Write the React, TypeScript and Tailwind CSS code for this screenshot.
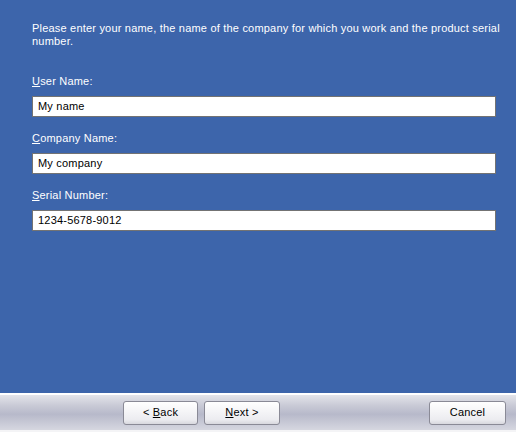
export default function App() {
  const fields = [
    { key: "U", rest: "ser Name:", value: "My name" },
    { key: "C", rest: "ompany Name:", value: "My company" },
    { key: "S", rest: "erial Number:", value: "1234-5678-9012" },
  ];

  return (
    <div className="w-[516px] h-[432px] flex flex-col bg-[#3d65ab] font-['Liberation_Sans',Tahoma,sans-serif] text-[11px] tracking-[0.2px]">
      {/* Body */}
      <div className="flex-1 pl-[32px] pr-[20px] pt-[22px]">
        <p className="text-white leading-[13px] whitespace-nowrap">
          Please enter your name, the name of the company for which you work and the product serial
          <br />
          number.
        </p>
        <div className="mt-[27px] flex flex-col gap-[15px]">
          {fields.map((f) => (
            <div key={f.key} className="flex flex-col gap-[8px]">
              <label className="text-white leading-[13px]">
                <span className="underline">{f.key}</span>
                {f.rest}
              </label>
              <div className="h-[21px] bg-white border border-[#737373] flex items-center pl-[5px] text-black">
                {f.value}
              </div>
            </div>
          ))}
        </div>
      </div>

      {/* Button bar */}
      <div className="h-[39px] flex flex-col">
        <div className="h-[2px] bg-white" />
        <div className="flex-1 flex items-center pr-[10px] bg-[linear-gradient(to_bottom,#e4e4ea_0%,#c9cad6_30%,#b7b9ca_55%,#d6d7e0_100%)] border-b-2 border-[#f4f4f6]">
          <div className="flex gap-[6px] ml-[123px]">
            <button className="w-[75px] h-[24px] rounded-[3px] border border-[#8a8a96] bg-[linear-gradient(to_bottom,#ffffff,#ececf0_80%,#d8d8de)] text-black">
              &lt; <span className="underline">B</span>ack
            </button>
            <button className="w-[76px] h-[24px] rounded-[3px] border border-[#8a8a96] bg-[linear-gradient(to_bottom,#ffffff,#ececf0_80%,#d8d8de)] text-black">
              <span className="underline">N</span>ext &gt;
            </button>
          </div>
          <button className="ml-auto w-[77px] h-[24px] rounded-[3px] border border-[#8a8a96] bg-[linear-gradient(to_bottom,#ffffff,#ececf0_80%,#d8d8de)] text-black">
            Cancel
          </button>
        </div>
      </div>
    </div>
  );
}
